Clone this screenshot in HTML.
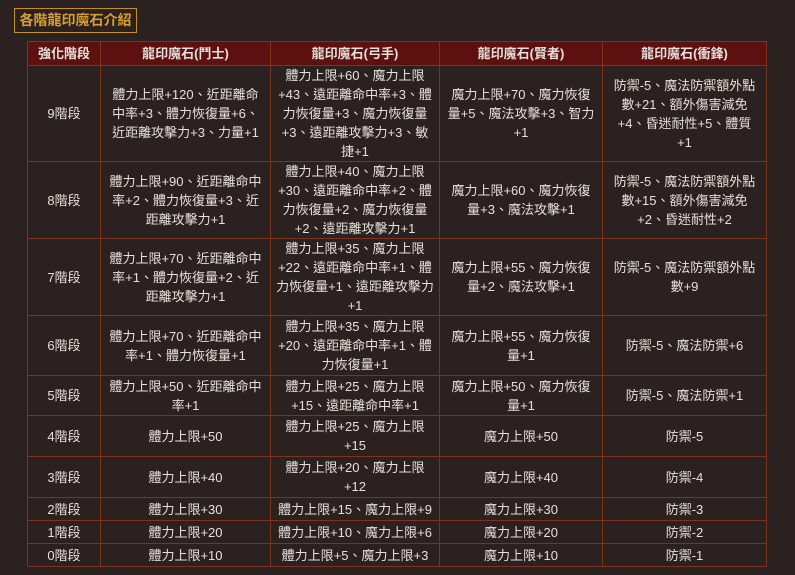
<!DOCTYPE html>
<html><head><meta charset="utf-8"><style>
html,body{margin:0;padding:0;background:#2a2120;width:795px;height:575px;overflow:hidden;}
body{font-family:"Liberation Sans","Noto Sans CJK TC",sans-serif;color:#e6e0da;}
.title{position:absolute;left:14px;top:8px;width:121px;height:23px;border:1px solid #c39020;color:#d9a02c;font-size:14px;line-height:23px;text-align:center;font-weight:bold;white-space:nowrap;}
table{position:absolute;left:27px;top:41px;border-collapse:collapse;table-layout:fixed;width:739px;}
td,th{border:1px solid #7c3519;text-align:center;vertical-align:middle;font-size:13px;line-height:19px;padding:0;overflow:hidden;white-space:nowrap;}
th{background:#5c1010;font-weight:bold;height:23px;}
td{font-weight:normal;}
</style></head><body>
<div class="title">各階龍印魔石介紹</div>
<table>
<colgroup><col style="width:73px"><col style="width:170px"><col style="width:169px"><col style="width:163px"><col style="width:164px"></colgroup>
<tr><th>強化階段</th><th>龍印魔石(鬥士)</th><th>龍印魔石(弓手)</th><th>龍印魔石(賢者)</th><th>龍印魔石(衝鋒)</th></tr>
<tr style="height:95px"><td>9階段</td><td>體力上限+120、近距離命<br>中率+3、體力恢復量+6、<br>近距離攻擊力+3、力量+1</td><td>體力上限+60、魔力上限<br>+43、遠距離命中率+3、體<br>力恢復量+3、魔力恢復量<br>+3、遠距離攻擊力+3、敏<br>捷+1</td><td>魔力上限+70、魔力恢復<br>量+5、魔法攻擊+3、智力<br>+1</td><td>防禦-5、魔法防禦額外點<br>數+21、額外傷害減免<br>+4、昏迷耐性+5、體質<br>+1</td></tr>
<tr style="height:77px"><td>8階段</td><td>體力上限+90、近距離命中<br>率+2、體力恢復量+3、近<br>距離攻擊力+1</td><td>體力上限+40、魔力上限<br>+30、遠距離命中率+2、體<br>力恢復量+2、魔力恢復量<br>+2、遠距離攻擊力+1</td><td>魔力上限+60、魔力恢復<br>量+3、魔法攻擊+1</td><td>防禦-5、魔法防禦額外點<br>數+15、額外傷害減免<br>+2、昏迷耐性+2</td></tr>
<tr style="height:77px"><td>7階段</td><td>體力上限+70、近距離命中<br>率+1、體力恢復量+2、近<br>距離攻擊力+1</td><td>體力上限+35、魔力上限<br>+22、遠距離命中率+1、體<br>力恢復量+1、遠距離攻擊力<br>+1</td><td>魔力上限+55、魔力恢復<br>量+2、魔法攻擊+1</td><td>防禦-5、魔法防禦額外點<br>數+9</td></tr>
<tr style="height:60px"><td>6階段</td><td>體力上限+70、近距離命中<br>率+1、體力恢復量+1</td><td>體力上限+35、魔力上限<br>+20、遠距離命中率+1、體<br>力恢復量+1</td><td>魔力上限+55、魔力恢復<br>量+1</td><td>防禦-5、魔法防禦+6</td></tr>
<tr style="height:40px"><td>5階段</td><td>體力上限+50、近距離命中<br>率+1</td><td>體力上限+25、魔力上限<br>+15、遠距離命中率+1</td><td>魔力上限+50、魔力恢復<br>量+1</td><td>防禦-5、魔法防禦+1</td></tr>
<tr style="height:41px"><td>4階段</td><td>體力上限+50</td><td>體力上限+25、魔力上限<br>+15</td><td>魔力上限+50</td><td>防禦-5</td></tr>
<tr style="height:41px"><td>3階段</td><td>體力上限+40</td><td>體力上限+20、魔力上限<br>+12</td><td>魔力上限+40</td><td>防禦-4</td></tr>
<tr style="height:23px"><td>2階段</td><td>體力上限+30</td><td>體力上限+15、魔力上限+9</td><td>魔力上限+30</td><td>防禦-3</td></tr>
<tr style="height:23px"><td>1階段</td><td>體力上限+20</td><td>體力上限+10、魔力上限+6</td><td>魔力上限+20</td><td>防禦-2</td></tr>
<tr style="height:23px"><td>0階段</td><td>體力上限+10</td><td>體力上限+5、魔力上限+3</td><td>魔力上限+10</td><td>防禦-1</td></tr>
</table>
</body></html>
